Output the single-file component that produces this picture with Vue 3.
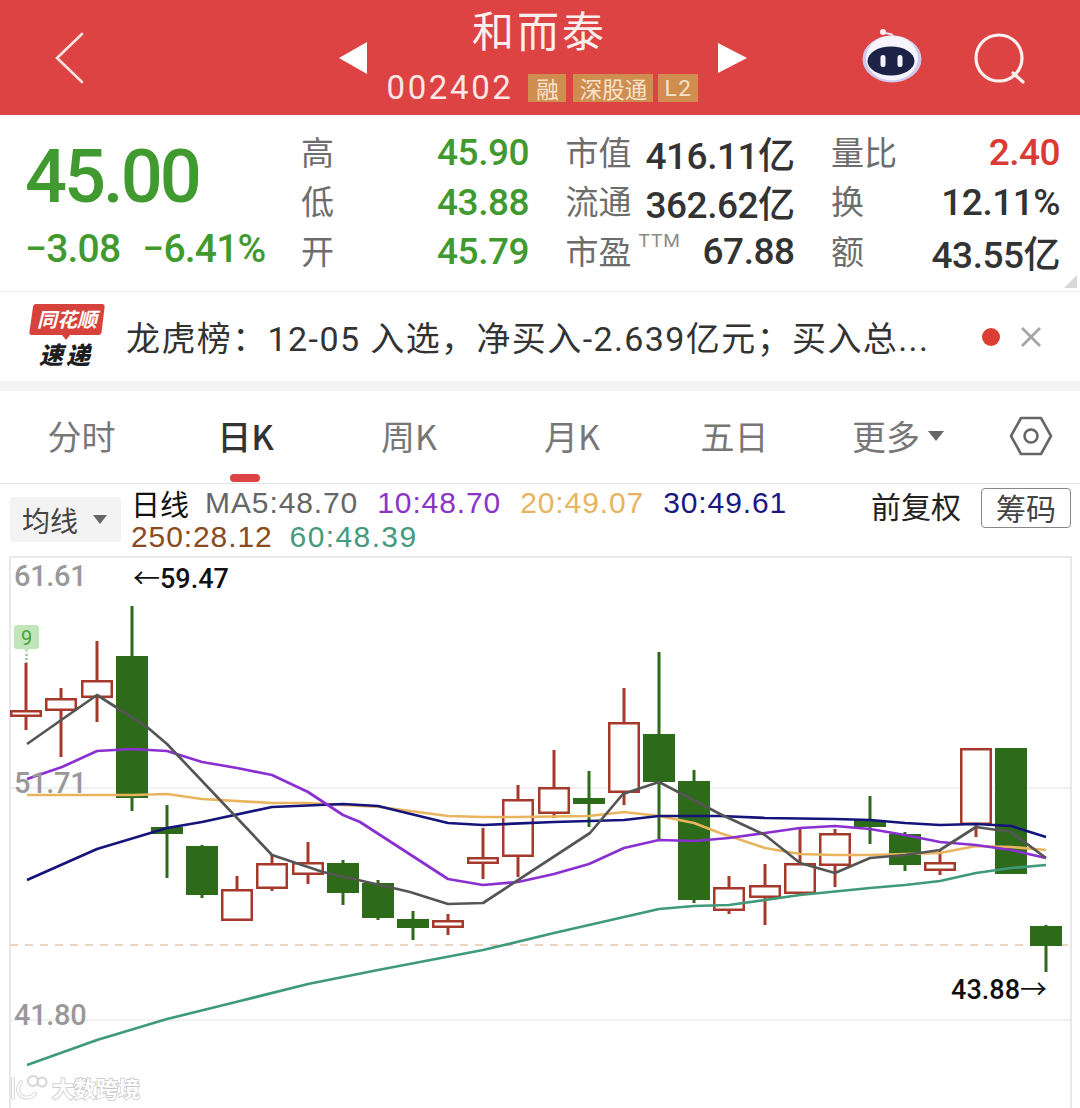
<script setup>
const rows = [
  [{ l: '高', v: '45.90', c: 'green' }, { l: '市值', v: '416.11亿' }, { l: '量比', v: '2.40', c: 'red' }],
  [{ l: '低', v: '43.88', c: 'green' }, { l: '流通', v: '362.62亿' }, { l: '换', v: '12.11%' }],
  [{ l: '开', v: '45.79', c: 'green' }, { l: '市盈', sup: 'TTM', v: '67.88' }, { l: '额', v: '43.55亿' }]
]
const tabs = [
  { t: '分时' }, { t: '日K', on: true }, { t: '周K' }, { t: '月K' }, { t: '五日' }
]
// x, wickTop, wickBottom, bodyTop, bodyBottom, up
const raw = [
  [26,663,730,710,717,1],[61,688,757,698,711,1],[97,641,722,680,698,1],[132,606,811,656,798,0],
  [167,805,878,827,834,0],[202,845,898,846,895,0],[237,876,921,889,921,1],[272,854,891,863,889,1],
  [308,842,884,862,875,1],[343,860,905,863,893,0],[378,880,920,883,918,0],[413,911,940,919,928,0],
  [448,914,935,920,928,1],[483,828,879,857,864,1],[518,785,877,799,857,1],[554,750,818,787,814,1],
  [589,771,827,798,804,0],[624,688,805,722,793,1],[659,652,840,734,782,0],[694,770,903,781,900,0],
  [729,876,914,887,911,1],[765,864,925,885,898,1],[800,829,896,863,894,1],[835,829,887,833,866,1],
  [870,796,844,820,827,0],[905,832,871,834,865,0],[940,850,875,862,871,1],[976,748,837,748,825,1],
  [1011,748,874,748,874,0],[1046,925,972,926,946,0]
]
const candles = raw.map(([x, wt, wb, bt, bb, up]) => ({ x, wt, wb, bt, bb, up }))
const toPts = a => a.map(p => p.join(',')).join(' ')
const lines = [
  { c: '#3f9a7c', p: [[27,1065],[97,1040],[167,1019],[240,1001],[308,984],[378,970],[483,950],[554,933],[624,917],[659,909],[694,906],[729,905],[800,895],[870,888],[905,885],[940,881],[976,873],[1011,868],[1046,865]] },
  { c: '#e9b45e', p: [[27,795],[97,795],[132,795],[167,794],[202,799],[272,803],[308,803],[343,805],[380,807],[448,816],[483,817],[518,817],[589,816],[624,812],[659,816],[694,823],[720,833],[765,848],[800,854],[835,855],[870,855],[905,854],[940,853],[976,846],[1011,847],[1046,850]] },
  { c: '#14147a', p: [[27,880],[97,849],[167,828],[202,822],[272,807],[343,804],[378,806],[448,823],[483,825],[554,822],[624,820],[659,816],[720,816],[765,818],[835,819],[870,820],[905,823],[940,825],[976,824],[1011,826],[1046,837]] },
  { c: '#8a2fd0', p: [[27,779],[62,767],[97,751],[132,749],[167,751],[202,762],[237,768],[272,775],[308,792],[343,815],[360,822],[448,879],[483,885],[518,882],[554,874],[589,864],[624,848],[659,840],[694,841],[729,838],[765,833],[800,828],[835,826],[870,829],[905,835],[940,842],[976,845],[1011,850],[1046,858]] },
  { c: '#555555', p: [[27,744],[97,695],[147,727],[167,744],[272,855],[323,872],[393,888],[410,892],[448,904],[483,903],[590,833],[623,794],[659,782],[720,814],[765,835],[800,863],[835,873],[870,858],[905,855],[940,850],[976,827],[1011,832],[1046,858]] }
].map(l => ({ ...l, pts: toPts(l.p) }))
</script>

<template>
  <div class="page">
    <header class="top">
      <div class="back">
        <svg width="40" height="60" viewBox="0 0 40 60"><path d="M27 6 2 30l25 24" fill="none" stroke="#fbe3e2" stroke-width="2.600" stroke-linecap="round"/></svg>
      </div>
      <svg class="tri" width="28" height="32" viewBox="0 0 28 32"><path d="M0 16 28 0v32z" fill="#fff"/></svg>
      <div class="mid">
        <div class="title">和而泰</div>
        <div class="coderow">
          <span class="code">002402</span>
          <span class="badges">
            <span class="badge one">融</span>
            <span class="badge three">深股通</span>
            <span class="badge latin">L2</span>
          </span>
        </div>
      </div>
      <svg class="tri" width="29" height="30" viewBox="0 0 29 30"><path d="M29 15 0 0v30z" fill="#fff"/></svg>
      <div class="actions">
        <svg class="robot" width="62" height="58" viewBox="0 0 62 58">
          <path d="M31 9C31 4 26 7 21 4" fill="none" stroke="#ece8f8" stroke-width="2"/>
          <circle cx="21" cy="4" r="3" fill="#fbeef0"/>
          <ellipse cx="30" cy="31" rx="29.500" ry="23.500" fill="#cfc8ee"/>
          <ellipse cx="30" cy="30" rx="26" ry="22.500" fill="#f6f4fc"/>
          <ellipse cx="29" cy="33" rx="23.500" ry="14.500" fill="#1c2347"/>
          <rect x="18.500" y="27" width="5" height="12" rx="2.500" fill="#f4f4fb"/>
          <rect x="35.500" y="27" width="5" height="12" rx="2.500" fill="#f4f4fb"/>
        </svg>
        <svg class="search" width="54" height="54" viewBox="0 0 54 54"><circle cx="25" cy="25" r="23" fill="none" stroke="#fdf0f0" stroke-width="3.200"/><path d="m39 40 10 9" stroke="#fdf0f0" stroke-width="3.200" stroke-linecap="round"/></svg>
      </div>
    </header>

    <section class="stats">
      <div class="price">
        <div class="big">45.00</div>
        <div class="change"><span>−3.08</span><span>−6.41%</span></div>
      </div>
      <div class="grid">
        <template v-for="(row, i) in rows" :key="i">
          <div v-for="cell in row" :key="cell.l" class="cell">
            <span class="label">{{ cell.l }}<sup v-if="cell.sup" class="ttm">{{ cell.sup }}</sup></span>
            <span class="value" :class="cell.c">{{ cell.v }}</span>
          </div>
        </template>
      </div>
      <span class="corner"></span>
    </section>

    <section class="notice">
      <svg class="logo" width="78" height="72" viewBox="0 0 78 72">
        <path d="M7 1h66q3 0 2.600 3l-3 25q-.5 3-3 3H41l-4 5-4-5H3q-3 0-2.600-3L4 4q.3-3 3-3z" fill="#d8423c"/>
        <text x="38" y="24" class="logo-top" text-anchor="middle">同花顺</text>
        <text x="37" y="61" class="logo-bot" text-anchor="middle">速递</text>
      </svg>
      <div class="notice-text">龙虎榜：12-05 入选，净买入-2.639亿元；买入总...</div>
      <span class="dot"></span>
      <svg class="close" width="20" height="20" viewBox="0 0 20 20"><path d="m1 1 18 18M19 1 1 19" stroke="#a5a5a5" stroke-width="2.800"/></svg>
    </section>

    <div class="gap"></div>

    <nav class="tabs">
      <span v-for="t in tabs" :key="t.t" class="tab" :class="{ on: t.on }">{{ t.t }}<i v-if="t.on" class="bar"></i></span>
      <span class="tab more">更多<i class="caret small"></i></span>
      <svg class="hex" width="44" height="40" viewBox="0 0 44 40"><path d="M12 2h20l10 18-10 18H12L2 20z" fill="none" stroke="#666" stroke-width="2.600" stroke-linejoin="round"/><circle cx="22" cy="20" r="6.500" fill="none" stroke="#666" stroke-width="2.600"/></svg>
    </nav>

    <section class="legend">
      <div class="avg">均线<i class="caret"></i></div>
      <div class="ma">
        <div class="ma-row">
          <span class="daily">日线</span>
          <span class="c5">MA5:48.70</span>
          <span class="c10">10:48.70</span>
          <span class="c20">20:49.07</span>
          <span class="c30">30:49.61</span>
        </div>
        <div class="ma-row second">
          <span class="c250">250:28.12</span>
          <span class="c60">60:48.39</span>
        </div>
      </div>
      <div class="fq">前复权</div>
      <div class="chip">筹码</div>
    </section>

    <div class="chart">
      <svg class="plot" width="1080" height="552" viewBox="0 556 1080 552">
        <rect x="0" y="556" width="1080" height="552" fill="#fff"/>
        <path d="M10 557H1071" stroke="#e8e8e8" stroke-width="2"/>
        <path d="M10 556V1108M1071 556V1108" stroke="#e8e8e8" stroke-width="2"/>
        <path d="M10 788H1071M10 1020H1071" stroke="#e3e3e3" stroke-width="1"/>
        <path d="M10 945H1071" stroke="#e2c7ac" stroke-width="1.500" stroke-dasharray="8 7"/>
        <g v-for="k in candles" :key="k.x">
          <template v-if="k.up">
            <path :d="`M${k.x} ${k.wt}V${k.wb}`" stroke="#a5392b" stroke-width="3"/>
            <rect :x="k.x - 14.750" :y="k.bt + 1.250" width="29.500" :height="k.bb - k.bt - 2.500" fill="#fff" stroke="#a5392b" stroke-width="2.500"/>
          </template>
          <template v-else>
            <path :d="`M${k.x} ${k.wt}V${k.wb}`" stroke="#2d6a1a" stroke-width="3"/>
            <rect :x="k.x - 16" :y="k.bt" width="32" :height="k.bb - k.bt" fill="#2d6a1a"/>
          </template>
        </g>
        <polyline v-for="l in lines" :key="l.c" :points="l.pts" fill="none" :stroke="l.c" stroke-width="2.700" stroke-linejoin="round"/>
        <path d="M17 625h19q3 0 3 3v18q0 3-3 3h-7l-2.500 4-2.500-4h-7q-3 0-3-3v-18q0-3 3-3z" fill="#bfe5b9"/>
        <path d="M26.500 654V663" stroke="#7fb777" stroke-width="2" stroke-dasharray="2 2"/>
        <text x="26.500" y="645" class="nine" text-anchor="middle">9</text>
        <text x="14" y="586" class="axis">61.61</text>
        <text x="14" y="793" class="axis">51.71</text>
        <text x="14" y="1025" class="axis">41.80</text>
        <text x="133" y="588" class="peak"><tspan class="arrow">←</tspan>59.47</text>
        <text x="1047" y="999" class="peak" text-anchor="end">43.88<tspan class="arrow">→</tspan></text>
        <g class="wm">
          <path d="M13 1079v19M21 1082q-6 8 0 14 7 4 14-2" fill="none" stroke="#d8d8d8" stroke-width="4" stroke-linecap="round"/>
          <path d="M13 1079v19M21 1082q-6 8 0 14 7 4 14-2" fill="none" stroke="#fff" stroke-width="2" stroke-linecap="round"/>
          <circle cx="33" cy="1081" r="5" fill="none" stroke="#d5d5d5" stroke-width="2"/>
          <circle cx="42" cy="1082" r="4.500" fill="none" stroke="#d5d5d5" stroke-width="2"/>
          <text x="52" y="1097" class="wm-text">大数跨境</text>
        </g>
      </svg>
    </div>
  </div>
</template>

<style>
html, body { margin: 0; background: #fff; }
</style>

<style scoped>
.page {
  width: 1080px;
  height: 1108px;
  overflow: hidden;
  background: #fff;
  font-family: Roboto, "Noto Sans CJK SC", sans-serif;
}
.top {
  height: 115px;
  background: #dd4342;
  display: grid;
  grid-template-columns: 339px 28px 1fr 29px 333px;
  align-items: center;
  color: #fff;
}
.back { padding-left: 55px; display: flex; align-items: center; }
.mid { height: 115px; display: flex; flex-direction: column; align-items: center; padding-top: 1px; box-sizing: border-box; }
.title { font-family: "Noto Sans CJK SC", sans-serif; font-size: 42px; line-height: 56px; letter-spacing: 3px; color: #fbeeee; margin-left: -6px; }
.coderow { margin-top: 17px; display: flex; align-items: center; height: 28px; }
.code { font-size: 33px; font-weight: 400; letter-spacing: 2.600px; color: #f9e6e5; margin: -2px 15px 0 0; }
.badges { display: flex; gap: 7px; }
.badge {
  background: #cf8e50;
  color: #f7e3cc;
  font-family: "Noto Sans CJK SC", sans-serif;
  font-size: 22.500px;
  line-height: 28px;
  height: 28px;
  white-space: nowrap;
  display: flex;
  justify-content: center;
}
.one { width: 38px; }
.three { width: 80px; margin-right: -2px; }
.latin { width: 40px; font-family: Roboto, sans-serif; letter-spacing: 1.500px; }
.actions { height: 115px; display: flex; align-items: center; }
.robot { margin-left: 115px; margin-top: -2px; }
.search { margin-left: 50px; margin-top: 4px; }

.stats { height: 176px; display: flex; position: relative; box-sizing: border-box; }
.price { width: 301px; padding-left: 25px; box-sizing: border-box; color: #419a2f; font-weight: 500; }
.big { font-size: 74px; line-height: 74px; margin-top: 25px; letter-spacing: -3px; }
.change { font-size: 39px; line-height: 40px; margin-top: 15px; display: flex; gap: 22px; letter-spacing: -0.800px; white-space: nowrap; }
.grid {
  display: grid;
  grid-template-columns: 228px 229px 229px;
  grid-auto-rows: 49.500px;
  column-gap: 36.500px;
  padding-top: 13px;
}
.cell { display: flex; justify-content: space-between; align-items: center; white-space: nowrap; }
.label { font-family: "Noto Sans CJK SC", sans-serif; font-size: 33px; color: #6d6d6d; display: flex; align-items: flex-start; margin-top: -4px; }
.ttm { font-family: Roboto, sans-serif; font-size: 19px; line-height: 20px; margin: 5px 0 0 7px; color: #8a8a8a; letter-spacing: 1px; }
.value { font-size: 37px; font-weight: 500; color: #333; letter-spacing: -0.500px; }
.value.green { color: #419a2f; }
.value.red { color: #d93a33; }
.corner {
  position: absolute;
  right: 3px;
  bottom: 3px;
  width: 0;
  height: 0;
  border-left: 13px solid transparent;
  border-bottom: 13px solid #d8d8d8;
}

.notice { height: 90px; border-top: 1px solid #ececec; box-sizing: border-box; display: flex; align-items: center; }
.logo { margin: 4px 0 0 29px; flex: none; }
.logo-top { font: italic 700 20px "Noto Sans CJK SC", sans-serif; fill: #fff; }
.logo-bot { font: italic 900 24px "Noto Sans CJK SC", sans-serif; letter-spacing: 3px; fill: #1e1e1e; }
.notice-text { width: 806px; margin-left: 19px; font-size: 34px; letter-spacing: 1.400px; color: #333; white-space: nowrap; flex: none; }
.dot { width: 18px; height: 18px; border-radius: 50%; background: #dd3e33; margin-left: 50px; flex: none; }
.close { margin-left: 21px; flex: none; }
.gap { height: 10px; background: #f4f4f4; }

.tabs {
  height: 93px;
  border-bottom: 1px solid #e6e6e6;
  box-sizing: border-box;
  display: grid;
  grid-template-columns: 163px 165px 162px 164px 161px 166px 1fr;
  padding-bottom: 3px;
  align-items: center;
  justify-items: center;
  position: relative;
}
.tab { font-family: "Noto Sans CJK SC", sans-serif; font-size: 34px; color: #777; white-space: nowrap; }
.tab.on { color: #333; font-weight: 500; }
.bar { position: absolute; left: 230px; top: 83px; width: 30px; height: 8px; border-radius: 4px; background: #dd4342; }
.more { display: flex; align-items: center; }
.caret {
  display: inline-block;
  width: 0;
  height: 0;
  border-left: 8px solid transparent;
  border-right: 8px solid transparent;
  border-top: 10px solid #666;
  margin-left: 8px;
}

.legend { height: 72px; display: flex; position: relative; box-sizing: border-box; }
.avg {
  width: 99px;
  height: 45px;
  margin: 13px 0 0 10px;
  padding-left: 12px;
  background: #f3f3f3;
  border-radius: 3px;
  font-family: "Noto Sans CJK SC", sans-serif;
  font-size: 28px;
  color: #444;
  display: flex;
  align-items: center;
  flex: none;
}
.avg .caret { border-width: 9px 7.500px 0; margin-left: 15px; }
.ma { margin-left: 10px; font-family: "Liberation Sans", sans-serif; font-size: 30px; letter-spacing: 0.900px; width: 740px; flex: none; }
.ma-row { display: flex; gap: 19px; height: 34px; align-items: center; white-space: nowrap; }
.ma-row:first-child { margin-top: 2px; }
.second { gap: 17px; }
.daily { color: #111; font-family: "Noto Sans CJK SC", sans-serif; font-size: 29px; margin-right: -3px; letter-spacing: 0; }
.c5 { color: #666; }
.c10 { color: #8a35c8; }
.c20 { color: #e7b45f; }
.c30 { color: #18187f; }
.c250 { color: #8a4a22; }
.c60 { color: #469a7d; letter-spacing: 1.400px; }
.fq { font-family: "Noto Sans CJK SC", sans-serif; font-size: 30px; color: #222; position: absolute; left: 871px; top: -1px; line-height: 44px; }
.chip {
  position: absolute;
  left: 981px;
  top: 4px;
  width: 90px;
  height: 40px;
  padding-bottom: 3px;
  box-sizing: border-box;
  border: 1px solid #888;
  border-radius: 4px;
  font-family: "Noto Sans CJK SC", sans-serif;
  font-size: 30px;
  color: #444;
  display: flex;
  align-items: center;
  justify-content: center;
}

.chart { height: 552px; }
.plot { display: block; }
.axis { font: 500 29px Roboto, sans-serif; fill: #999; letter-spacing: -0.300px; }
.peak { font: 500 27px Roboto, sans-serif; fill: #111; }
.arrow { font-family: "Noto Sans CJK SC", sans-serif; font-weight: 400; }
.nine { font: 400 20px Roboto, sans-serif; fill: #4aa13a; }
.wm-text { font: 700 22px "Noto Sans CJK SC", sans-serif; fill: #fff; stroke: #c4c4c4; stroke-width: 1.500px; paint-order: stroke; }
</style>
